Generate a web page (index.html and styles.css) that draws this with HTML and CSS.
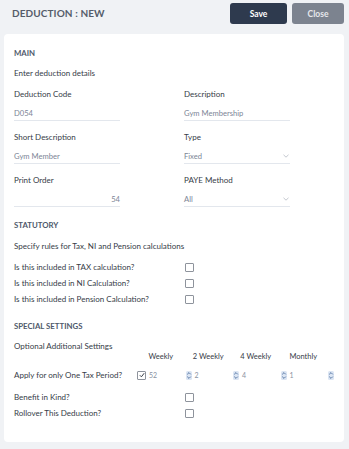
FILE: index.html
```
<!DOCTYPE html>
<html lang="en">
<head>
<meta charset="utf-8">
<title>Deduction : New</title>
<link rel="stylesheet" href="styles.css">
</head>
<body>
<header class="topbar">
  <h1 class="title">DEDUCTION : NEW</h1>
  <div class="actions">
    <button class="btn btn-save">Save</button>
    <button class="btn btn-close">Close</button>
  </div>
</header>
<main class="card">
  <h2 class="section-title">MAIN</h2>
  <p class="text intro">Enter deduction details</p>
  <div class="fields">
    <div class="field">
      <div class="label">Deduction Code</div>
      <div class="value">D054</div>
    </div>
    <div class="field">
      <div class="label">Description</div>
      <div class="value">Gym Membership</div>
    </div>
    <div class="field">
      <div class="label">Short Description</div>
      <div class="value">Gym Member</div>
    </div>
    <div class="field">
      <div class="label">Type</div>
      <div class="value select">Fixed<svg class="chev" width="6" height="4" viewBox="0 0 6 4"><path d="M0.5 0.8 L3 3.2 L5.5 0.8" fill="none" stroke="#b4b9c2" stroke-width="0.8"/></svg></div>
    </div>
    <div class="field">
      <div class="label">Print Order</div>
      <div class="value num">54</div>
    </div>
    <div class="field">
      <div class="label">PAYE Method</div>
      <div class="value select">All<svg class="chev" width="6" height="4" viewBox="0 0 6 4"><path d="M0.5 0.8 L3 3.2 L5.5 0.8" fill="none" stroke="#b4b9c2" stroke-width="0.8"/></svg></div>
    </div>
  </div>

  <h2 class="section-title stat-title">STATUTORY</h2>
  <p class="text sub">Specify rules for Tax, NI and Pension calculations</p>
  <div class="checks">
    <div class="check-row"><span class="text">Is this included in TAX calculation?</span><span class="box"></span></div>
    <div class="check-row"><span class="text">Is this included in NI Calculation?</span><span class="box"></span></div>
    <div class="check-row"><span class="text">Is this included in Pension Calculation?</span><span class="box"></span></div>
  </div>

  <h2 class="section-title special-title">SPECIAL SETTINGS</h2>
  <p class="text optional">Optional Additional Settings</p>
  <div class="periods">
    <span></span>
    <span class="phead">Weekly</span>
    <span class="phead">2 Weekly</span>
    <span class="phead">4 Weekly</span>
    <span class="phead">Monthly</span>
    <span></span>

    <span class="text prow">Apply for only One Tax Period?</span>
    <span class="pcell prow"><span class="box checked"><svg width="6" height="6" viewBox="0 0 6 6"><path d="M0.8 3.2 L2.4 4.8 L5.2 1.2" fill="none" stroke="#3a3f48" stroke-width="1"/></svg></span><span class="pval">52</span></span>
    <span class="pcell prow"><span class="spin"><svg width="6" height="9" viewBox="0 0 6 9"><path d="M1.2 3.4 L3 1.6 L4.8 3.4 M1.2 5.6 L3 7.4 L4.8 5.6" fill="none" stroke="#4d6e9e" stroke-width="0.9"/></svg></span><span class="pval">2</span></span>
    <span class="pcell prow"><span class="spin"><svg width="6" height="9" viewBox="0 0 6 9"><path d="M1.2 3.4 L3 1.6 L4.8 3.4 M1.2 5.6 L3 7.4 L4.8 5.6" fill="none" stroke="#4d6e9e" stroke-width="0.9"/></svg></span><span class="pval">4</span></span>
    <span class="pcell prow"><span class="spin"><svg width="6" height="9" viewBox="0 0 6 9"><path d="M1.2 3.4 L3 1.6 L4.8 3.4 M1.2 5.6 L3 7.4 L4.8 5.6" fill="none" stroke="#4d6e9e" stroke-width="0.9"/></svg></span><span class="pval">1</span></span>
    <span class="pcell prow"><span class="spin"><svg width="6" height="9" viewBox="0 0 6 9"><path d="M1.2 3.4 L3 1.6 L4.8 3.4 M1.2 5.6 L3 7.4 L4.8 5.6" fill="none" stroke="#4d6e9e" stroke-width="0.9"/></svg></span></span>
  </div>
  <div class="checks extra">
    <div class="check-row"><span class="text">Benefit in Kind?</span><span class="box"></span></div>
    <div class="check-row"><span class="text">Rollover This Deduction?</span><span class="box"></span></div>
  </div>
</main>
</body>
</html>
```
FILE: styles.css
```
* { box-sizing: border-box; }
html, body { margin: 0; padding: 0; }
body {
  width: 349px;
  height: 449px;
  background: #f0f2f5;
  font-family: Lato, "Open Sans", Arial, sans-serif;
  color: #363c47;
  overflow: hidden;
}
.topbar {
  height: 34px;
  padding: 3px 5px 0 12px;
  display: flex;
  align-items: flex-start;
  justify-content: space-between;
}
.title {
  margin: 0;
  height: 21px;
  line-height: 21px;
  font-size: 10px;
  font-weight: 700;
  color: #555c6a;
  letter-spacing: 0.1px;
}
.actions { display: flex; gap: 5px; }
.btn {
  height: 21px;
  border: 0;
  border-radius: 3px;
  font-family: inherit;
  font-size: 8.5px;
  font-weight: 700;
  padding: 0;
  cursor: pointer;
}
.btn-save { width: 57px; background: #2e3a4e; color: #ffffff; }
.btn-close { width: 52px; background: #7c838f; color: #e6e8ec; }

.card {
  margin: 0 5px 0 4px;
  height: 408px;
  background: #ffffff;
  border-radius: 4px;
  padding: 13px 10px 0;
}
.section-title {
  margin: 0;
  font-size: 7.8px;
  line-height: 12px;
  font-weight: 700;
  color: #4f596b;
}
.text { font-size: 8px; line-height: 12px; color: #363c47; }
p.text { margin: 0; }
.intro { margin-top: 8px !important; }
.fields {
  margin-top: 9px;
  display: grid;
  grid-template-columns: 106px 106px;
  column-gap: 64px;
  row-gap: 10px;
}
.label { font-size: 8px; line-height: 12px; color: #363c47; }
.value {
  margin-top: 7px;
  font-size: 7.6px;
  line-height: 12px;
  color: #7c8596;
  padding-bottom: 1px;
  border-bottom: 1px solid #e3e7ed;
  display: flex;
  align-items: center;
  justify-content: space-between;
}
.value.num { justify-content: flex-end; }
.chev { margin-right: 1px; }
.stat-title { margin-top: 12px; }
.sub { margin-top: 9px !important; }
.checks { margin-top: 7px; }
.check-row {
  display: grid;
  grid-template-columns: 171px 1fr;
  align-items: center;
  height: 16px;
}
.box {
  width: 9px;
  height: 9px;
  border: 1px solid #8e939c;
  border-radius: 1px;
  background: #fff;
  display: inline-flex;
  align-items: center;
  justify-content: center;
}
.special-title { margin-top: 13px; }
.optional { margin-top: 9px !important; line-height: 10px !important; }
.periods {
  display: grid;
  grid-template-columns: 123px repeat(4, 47.5px) 1fr;
  grid-template-rows: 12px 16px;
  row-gap: 4px;
  align-items: center;
}
.phead { font-size: 7.5px; line-height: 12px; text-align: center; color: #363c47; }
.pcell { display: flex; align-items: center; gap: 3px; }
.pval { font-size: 7px; color: #8a92a1; }
.spin {
  width: 6px;
  height: 9px;
  border-radius: 1.5px;
  background: #dbe5f3;
  display: inline-flex;
  margin-left: 1px;
}
.spin svg { display: block; }
.extra { margin-top: 6px; }
```
